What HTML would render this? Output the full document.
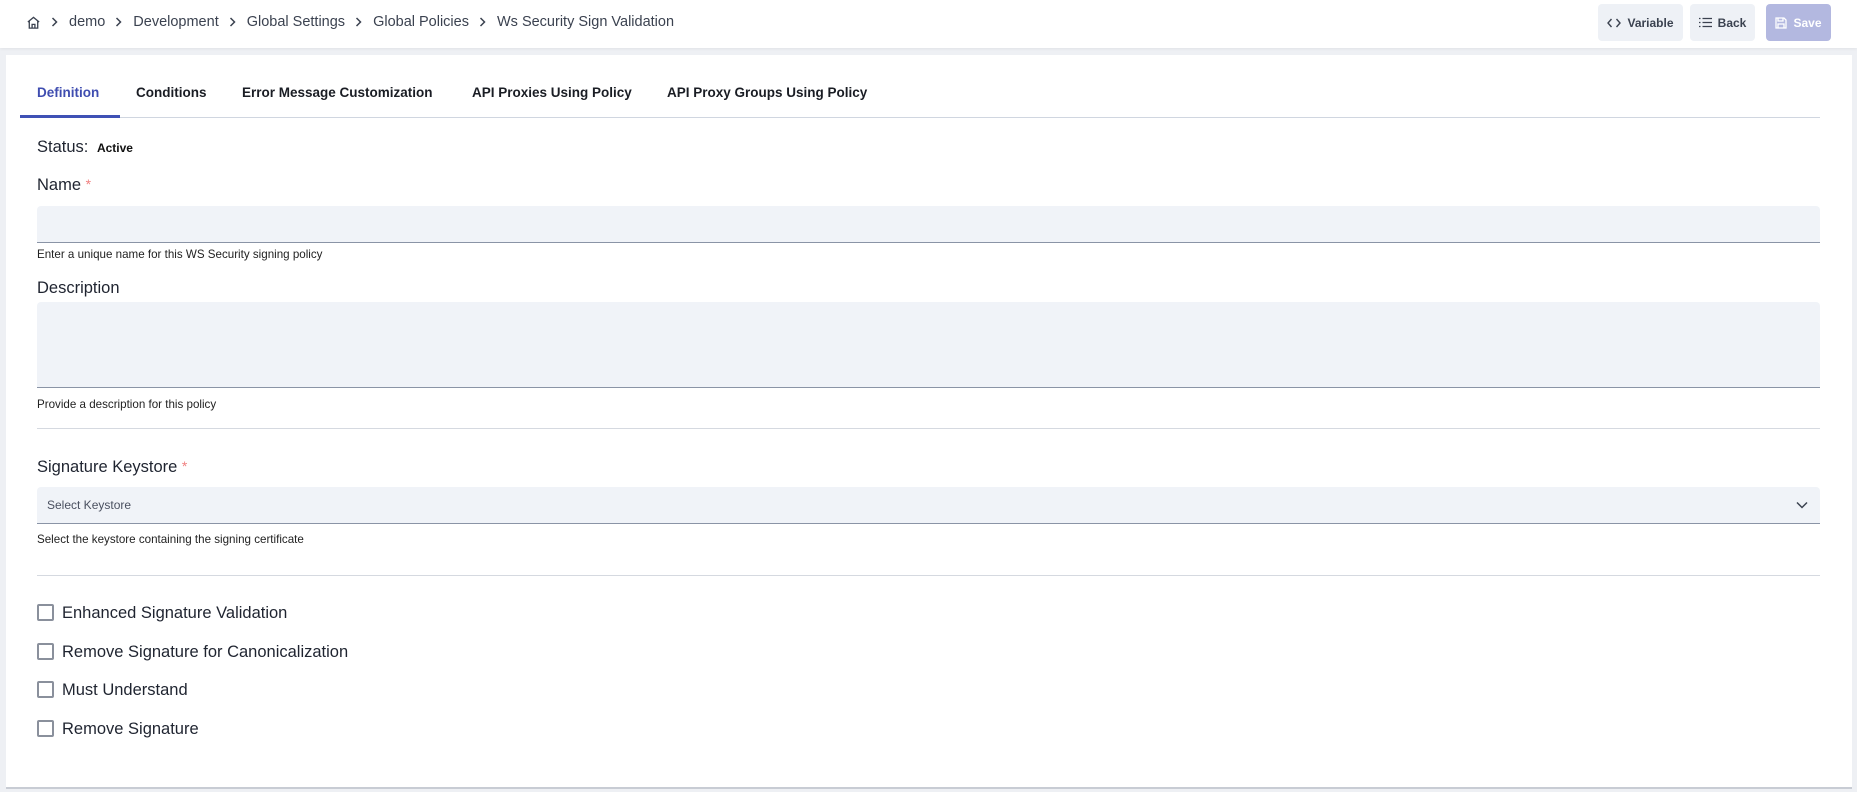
<!DOCTYPE html>
<html><head><meta charset="utf-8"><style>
*{box-sizing:border-box;margin:0;padding:0}
body{width:1857px;height:792px;background:#eef0f4;font-family:"Liberation Sans",sans-serif;color:#1f2430;position:relative;overflow:hidden}
.top{position:absolute;left:0;top:0;width:1857px;height:48px;background:#fff;box-shadow:0 1px 3px rgba(0,0,0,.06)}
.bc{position:absolute;left:26px;top:14px;font-size:14.5px;color:#3b4250;display:flex;align-items:center;white-space:nowrap}
.bc svg.s{margin:0 11px 0 10px}
.btn{position:absolute;top:4px;height:37px;border-radius:4px;background:#eef1f6;font-size:12px;font-weight:bold;color:#3b4250;display:flex;align-items:center;justify-content:center;gap:6px}
.card{position:absolute;left:6px;top:55px;width:1846px;height:734px;background:#fff;border-bottom:2px solid #c8ccd4}
.tabs{position:absolute;left:14px;top:0;width:1800px;height:63px;border-bottom:1px solid #d0d6e0}
.tab{position:absolute;top:30px;font-size:13.5px;font-weight:bold;color:#1a1d24;white-space:nowrap}
.abs{position:absolute;white-space:nowrap}
.lbl{font-size:16.5px;color:#1f2430}
.req{color:#f08080;font-size:14px;vertical-align:top}
.help{font-size:11.6px;color:#222}
.inp{position:absolute;left:31px;width:1783px;background:#f0f3f8;border-bottom:1.5px solid #8a94a6;border-radius:4px 4px 0 0}
.div{position:absolute;left:31px;width:1783px;height:1px;background:#d5d9e0}
.cb{position:absolute;left:31px;width:17px;height:17px;border:2px solid #8a909c;border-radius:2px;background:#fff}
.cbl{position:absolute;left:56px;font-size:16.5px;color:#1f2430;white-space:nowrap}
</style></head><body>
<div class="top">
  <div class="bc">
    <svg width="15" height="15" viewBox="0 0 16 16" fill="none" stroke="#3b4250" stroke-width="1.4"><path d="M2 7.5L8 2.5l6 5M3.5 6.5V14h9V6.5M6.5 14V10h3v4"/></svg>
    <svg class="s" width="7" height="10" viewBox="0 0 7 10" fill="none" stroke="#3b4250" stroke-width="1.5"><path d="M1.5 1l4 4-4 4"/></svg>demo<svg class="s" width="7" height="10" viewBox="0 0 7 10" fill="none" stroke="#3b4250" stroke-width="1.5"><path d="M1.5 1l4 4-4 4"/></svg>Development<svg class="s" width="7" height="10" viewBox="0 0 7 10" fill="none" stroke="#3b4250" stroke-width="1.5"><path d="M1.5 1l4 4-4 4"/></svg>Global Settings<svg class="s" width="7" height="10" viewBox="0 0 7 10" fill="none" stroke="#3b4250" stroke-width="1.5"><path d="M1.5 1l4 4-4 4"/></svg>Global Policies<svg class="s" width="7" height="10" viewBox="0 0 7 10" fill="none" stroke="#3b4250" stroke-width="1.5"><path d="M1.5 1l4 4-4 4"/></svg>Ws Security Sign Validation
  </div>
  <div class="btn" style="left:1598px;width:85px"><svg width="14" height="10" viewBox="0 0 14 10" fill="none" stroke="#3b4250" stroke-width="1.4"><path d="M4.5 1L1 5l3.5 4M9.5 1L13 5l-3.5 4"/></svg>Variable</div>
  <div class="btn" style="left:1690px;width:65px"><svg width="13" height="11" viewBox="0 0 13 11" stroke="#3b4250" stroke-width="1.3"><path d="M0 1.5h1.5M0 5.5h1.5M0 9.5h1.5M3.5 1.5H13M3.5 5.5H13M3.5 9.5H13"/></svg>Back</div>
  <div class="btn" style="left:1766px;width:65px;background:#b3b8e0;color:#fff"><svg width="12" height="12" viewBox="0 0 12 12" fill="none" stroke="#fff" stroke-width="1.3"><path d="M1 1h8l2 2v8H1zM3 1v3h5V1M3 11V7h6v4"/></svg>Save</div>
</div>
<div class="card">
  <div class="tabs">
    <div class="tab" style="left:17px;color:#3f4db0">Definition</div>
    <div style="position:absolute;left:0;top:60px;width:100px;height:3px;background:#3f51b5"></div>
    <div class="tab" style="left:116px">Conditions</div>
    <div class="tab" style="left:222px">Error Message Customization</div>
    <div class="tab" style="left:452px">API Proxies Using Policy</div>
    <div class="tab" style="left:647px">API Proxy Groups Using Policy</div>
  </div>
  <div class="abs lbl" style="left:31px;top:83px">Status: <b style="font-size:12px;color:#111;margin-left:4px">Active</b></div>
  <div class="abs lbl" style="left:31px;top:121px">Name <span class="req">*</span></div>
  <div class="inp" style="top:151px;height:37px"></div>
  <div class="abs help" style="left:31px;top:193px">Enter a unique name for this WS Security signing policy</div>
  <div class="abs lbl" style="left:31px;top:224px">Description</div>
  <div class="inp" style="top:247px;height:86px"></div>
  <div class="abs help" style="left:31px;top:343px">Provide a description for this policy</div>
  <div class="div" style="top:373px"></div>
  <div class="abs lbl" style="left:31px;top:403px">Signature Keystore <span class="req">*</span></div>
  <div class="inp" style="top:432px;height:37px"><span class="abs" style="left:10px;top:11px;font-size:12px;color:#4a5060">Select Keystore</span>
    <svg class="abs" style="left:1759px;top:14px" width="12" height="8" viewBox="0 0 12 8" fill="none" stroke="#3b4250" stroke-width="1.5"><path d="M1 1.5l5 5 5-5"/></svg></div>
  <div class="abs help" style="left:31px;top:478px">Select the keystore containing the signing certificate</div>
  <div class="div" style="top:520px"></div>
  <div class="cb" style="top:549px"></div><div class="cbl" style="top:549px">Enhanced Signature Validation</div>
  <div class="cb" style="top:588px"></div><div class="cbl" style="top:588px">Remove Signature for Canonicalization</div>
  <div class="cb" style="top:626px"></div><div class="cbl" style="top:626px">Must Understand</div>
  <div class="cb" style="top:665px"></div><div class="cbl" style="top:665px">Remove Signature</div>
</div>
</body></html>
